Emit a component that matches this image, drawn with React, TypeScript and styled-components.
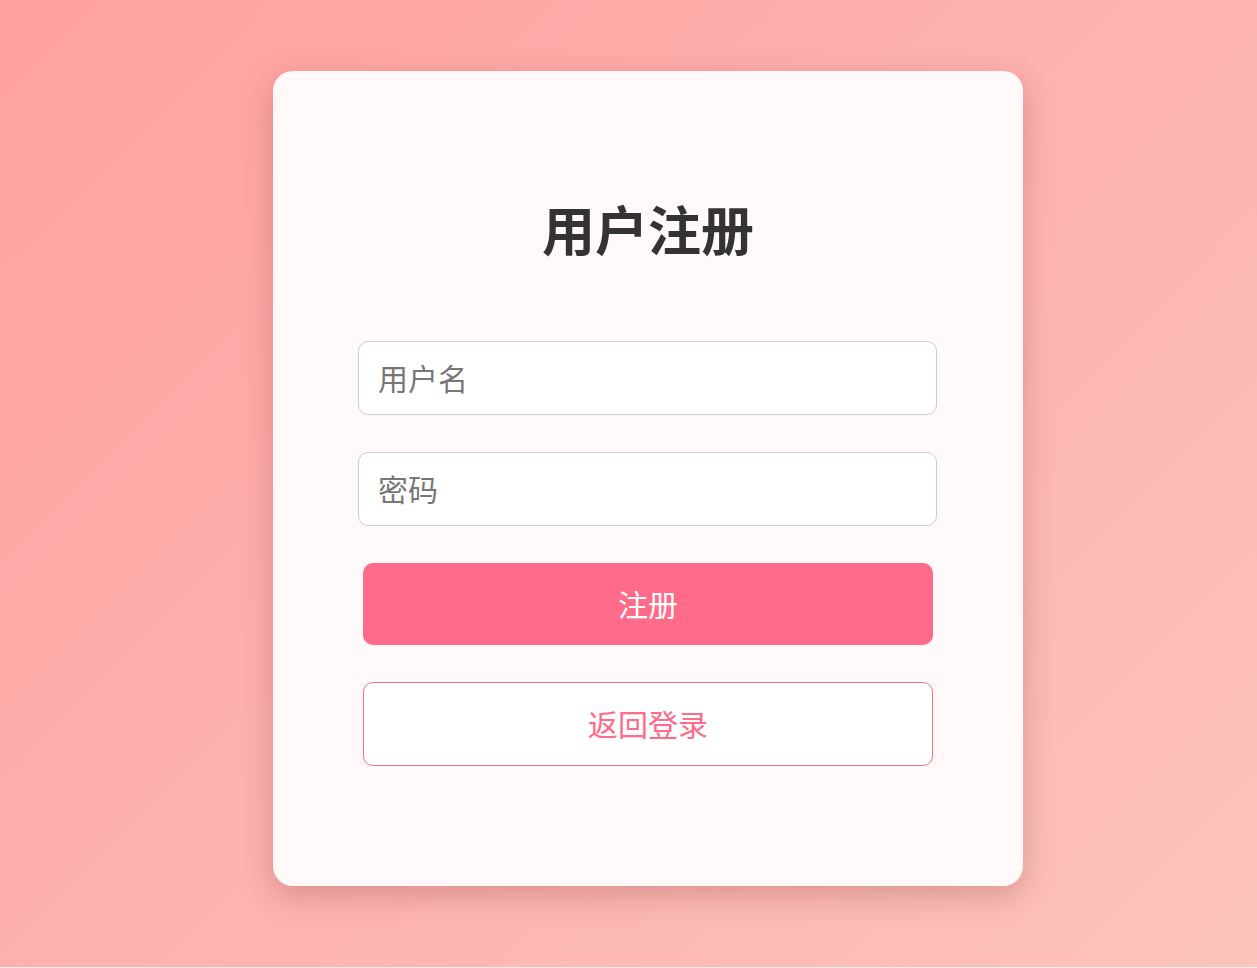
import styled, { createGlobalStyle } from "styled-components";

const GlobalStyle = createGlobalStyle`
  html, body {
    margin: 0;
    padding: 0;
    background: #eeeeee;
  }
  body {
    font-family: "Noto Sans CJK SC", "Noto Sans", sans-serif;
  }
  * {
    box-sizing: border-box;
  }
`;

const Page = styled.div`
  height: 967px;
  padding: 71px 0 0 39px;
  display: flex;
  justify-content: center;
  align-items: flex-start;
  background: linear-gradient(135deg, #ffa0a0 0%, #fcc4bb 100%);
`;

const Card = styled.div`
  width: 750px;
  height: 815px;
  padding: 121px 85px 0;
  background: #fffaf9;
  border-radius: 20px;
  box-shadow: 0 10px 30px rgba(120, 40, 40, 0.25);
  display: flex;
  flex-direction: column;
`;

const Title = styled.h1`
  margin: 0 0 76px;
  font-size: 53px;
  line-height: 73px;
  font-weight: 700;
  text-align: center;
  color: #333333;
`;

const Field = styled.input`
  height: 74px;
  margin: 0 1px 37px 0;
  padding: 0 19px 3px;
  font-family: inherit;
  font-size: 30px;
  color: #333;
  background: #ffffff;
  border: 1px solid #cccccc;
  border-radius: 10px;
  outline: none;
  &::placeholder {
    color: #777777;
  }
`;

const Button = styled.button<{ $outline?: boolean }>`
  margin: 0 5px;
  height: ${p => (p.$outline ? "84px" : "82px")};
  margin-bottom: ${p => (p.$outline ? "0" : "37px")};
  padding: 0 0 2px;
  font-family: inherit;
  font-size: 30px;
  border-radius: 10px;
  cursor: pointer;
  color: ${p => (p.$outline ? "#ff6b88" : "#ffffff")};
  background: ${p => (p.$outline ? "#ffffff" : "#ff6b88")};
  border: ${p => (p.$outline ? "1px solid #ff6b88" : "none")};
`;

const App = () => {
  return (
    <>
      <GlobalStyle />
      <Page>
        <Card>
          <Title>用户注册</Title>
          <Field type="text" placeholder="用户名" />
          <Field type="password" placeholder="密码" />
          <Button>注册</Button>
          <Button $outline>返回登录</Button>
        </Card>
      </Page>
    </>
  );
};

export default App;
